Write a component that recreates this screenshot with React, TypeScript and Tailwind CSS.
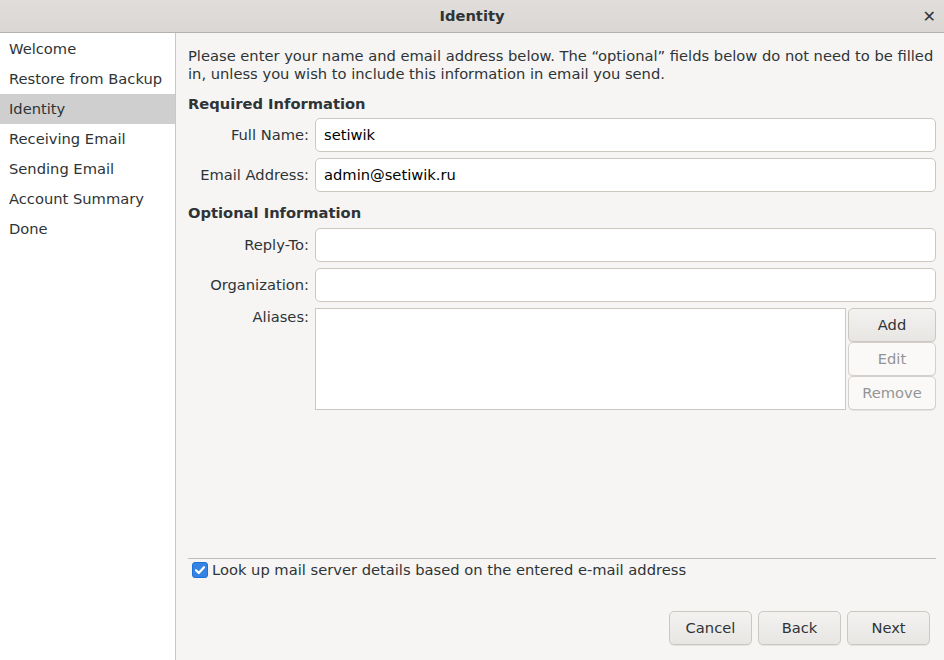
import React from "react";

const font = { fontFamily: '"DejaVu Sans", "Liberation Sans", sans-serif' };

function Btn({ label, disabled, cls }: { label: string; disabled?: boolean; cls: string }) {
  return (
    <div
      className={`flex items-center justify-center border border-[#cdc7c2] rounded-[5px] text-[14.7px] shadow-[0_1px_0_rgba(0,0,0,0.07)] ${
        disabled ? "bg-[#faf9f8] text-[#929595] border-[#d5d0cc]" : "bg-gradient-to-b from-[#f4f2f1] to-[#e8e6e3] text-[#2e3436]"
      } ${cls}`}
    >
      {label}
    </div>
  );
}

function Row({ label, value }: { label: string; value?: string }) {
  return (
    <div className="flex items-center h-[34px]">
      <div className="w-[127px] text-right pr-[6px] text-[14.7px] text-[#2e3436]">{label}</div>
      <div className="flex-1 h-[34px] bg-white border border-[#cdc7c2] rounded-[5px] flex items-center px-[8px] text-[14.7px] text-black">
        {value}
      </div>
    </div>
  );
}

export default function App() {
  return (
    <div className="w-[944px] h-[660px] flex flex-col bg-[#f6f5f4] overflow-hidden" style={font}>
      <div className="h-[33px] shrink-0 bg-gradient-to-b from-[#e0ddda] to-[#dad7d4] border-b border-[#b6b1ac] flex items-center justify-center relative">
        <span className="text-[14.7px] font-bold text-[#2e3436]">Identity</span>
        <span className="absolute right-[8px] top-[5px] text-[16px] font-bold text-[#2e3436]">✕</span>
      </div>
      <div className="flex flex-1 min-h-0">
        <div className="w-[176px] shrink-0 bg-white border-r border-[#cdc7c2] pt-[1px]">
          {["Welcome", "Restore from Backup", "Identity", "Receiving Email", "Sending Email", "Account Summary", "Done"].map((t) => (
            <div
              key={t}
              className={`h-[30px] flex items-center pl-[9px] text-[14.7px] text-[#2e3436] ${t === "Identity" ? "bg-[#cfcfcf]" : ""}`}
            >
              {t}
            </div>
          ))}
        </div>
        <div className="flex-1 flex flex-col pl-[12px] pr-[8px] pt-[14px] pb-[15px]">
          <div className="text-[14.7px] leading-[18px] text-[#2e3436]">
            Please enter your name and email address below. The “optional” fields below do not need to be filled in, unless you wish to include this information in email you send.
          </div>
          <div className="mt-[12px] text-[14.7px] font-bold text-[#2e3436] leading-[18px]">Required Information</div>
          <div className="mt-[5px] flex flex-col gap-[6px]">
            <Row label="Full Name:" value="setiwik" />
            <Row label="Email Address:" value="admin@setiwik.ru" />
          </div>
          <div className="mt-[12px] text-[14.7px] font-bold text-[#2e3436] leading-[18px]">Optional Information</div>
          <div className="mt-[6px] flex flex-col gap-[6px]">
            <Row label="Reply-To:" />
            <Row label="Organization:" />
            <div className="flex">
              <div className="w-[127px] text-right pr-[6px] text-[14.7px] leading-[18px] text-[#2e3436]">Aliases:</div>
              <div className="flex-1 h-[102px] bg-white border border-[#cdc7c2]" />
              <div className="w-[88px] ml-[2px] flex flex-col">
                <Btn label="Add" cls="h-[34px]" />
                <Btn label="Edit" disabled cls="h-[34px]" />
                <Btn label="Remove" disabled cls="h-[34px]" />
              </div>
            </div>
          </div>
          <div className="flex-1" />
          <div className="border-t border-[#c0bdba] flex items-center pl-[4px] gap-[4px] h-[23px]">
            <div className="w-[16px] h-[16px] rounded-[3px] bg-[#3584e4] border border-[#1c71d8] flex items-center justify-center">
              <svg width="12" height="12" viewBox="0 0 12 12">
                <path d="M2 6.2 L4.8 9 L10 3.2" fill="none" stroke="white" strokeWidth="2.2" strokeLinecap="round" strokeLinejoin="round" />
              </svg>
            </div>
            <span className="text-[14.7px] text-[#2e3436]">Look up mail server details based on the entered e-mail address</span>
          </div>
          <div className="mt-[30px] flex justify-end gap-[6px] pr-[6px]">
            <Btn label="Cancel" cls="w-[83px] h-[34px]" />
            <Btn label="Back" cls="w-[83px] h-[34px]" />
            <Btn label="Next" cls="w-[83px] h-[34px]" />
          </div>
        </div>
      </div>
    </div>
  );
}
